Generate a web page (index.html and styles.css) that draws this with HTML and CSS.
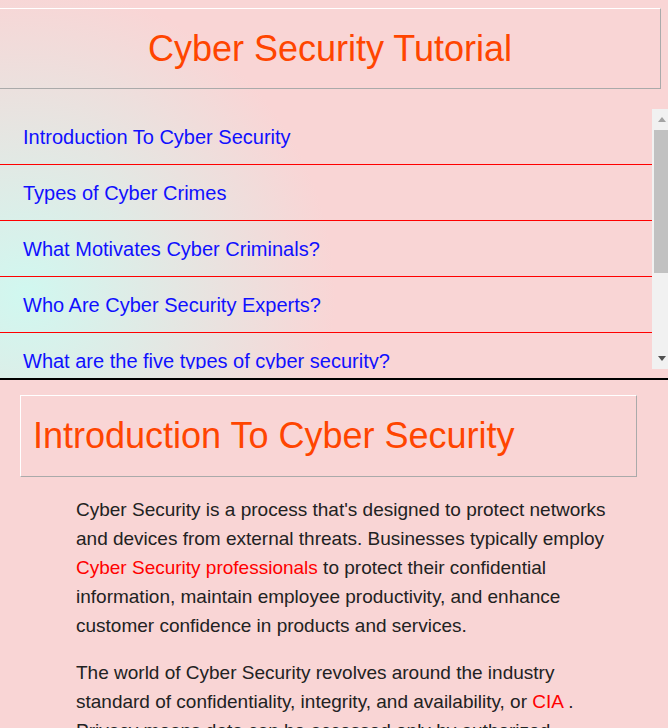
FILE: index.html
```html
<!DOCTYPE html>
<html lang="en">
<head>
<meta charset="utf-8">
<title>Cyber Security Tutorial</title>
<link rel="stylesheet" href="styles.css">
</head>
<body>
<div class="top">
  <header class="banner">
    <h1 class="site-title">Cyber Security Tutorial</h1>
  </header>
  <nav class="topics">
    <div class="topic-window">
      <ul class="topic-list">
        <li><a class="topic-link" href="#intro">Introduction To Cyber Security</a></li>
        <li><a class="topic-link" href="#types">Types of Cyber Crimes</a></li>
        <li><a class="topic-link" href="#motives">What Motivates Cyber Criminals?</a></li>
        <li><a class="topic-link" href="#experts">Who Are Cyber Security Experts?</a></li>
        <li><a class="topic-link" href="#five">What are the five types of cyber security?</a></li>
        <li><a class="topic-link" href="#tools">Cyber Security Tools</a></li>
        <li><a class="topic-link" href="#conclusion">Conclusion</a></li>
      </ul>
    </div>
    <div class="rail" aria-hidden="true">
      <div class="rail-btn"><span class="arrow arrow-up"></span></div>
      <div class="rail-track"><div class="rail-thumb"></div></div>
      <div class="rail-btn"><span class="arrow arrow-down"></span></div>
    </div>
  </nav>
</div>
<main class="content">
  <h2 class="section-title" id="intro">Introduction To Cyber Security</h2>
  <p class="para">Cyber Security is a process that's designed to protect networks and devices from external threats. Businesses typically employ <span class="hl">Cyber Security professionals</span> to protect their confidential information, maintain employee productivity, and enhance customer confidence in products and services.</p>
  <p class="para">The world of Cyber Security revolves around the industry standard of confidentiality, integrity, and availability, or <span class="hl">CIA</span> . Privacy means data can be accessed only by authorized parties; integrity assures information is reliable and accurate; and availability means data is available to those who need it.</p>
</main>
</body>
</html>
```
FILE: styles.css
```css
html, body {
  margin: 0;
  padding: 0;
}
body {
  background: #f9d5d5;
  font-family: "Liberation Sans", Arial, sans-serif;
}
.top {
  padding-top: 8px;
  border-bottom: 2px solid #000;
  background: radial-gradient(circle at 25px 295px, #d0f8f0 0px, #f9d5d5 310px);
}
.banner {
  margin-right: 7px;
  border: 1px solid;
  border-color: #ffffff #aaaaaa #aaaaaa #ffffff;
  border-left: none;
  padding: 19px 0;
  text-align: center;
}
.site-title {
  margin: 0;
  font-size: 36px;
  line-height: 41px;
  font-weight: normal;
  color: #ff4500;
}
.topics {
  display: flex;
  margin-top: 20px;
  margin-bottom: 9px;
  height: 260px;
}
.topic-window {
  flex: 1;
  overflow: hidden;
}
.topic-list {
  list-style: none;
  margin: 0;
  padding: 0;
}
.topic-link {
  display: block;
  padding: 17px 23px 15px;
  border-bottom: 1px solid #ff0000;
  color: #1010ff;
  text-decoration: none;
  font-size: 20px;
  line-height: 23px;
}
.rail {
  flex: none;
  width: 16px;
  display: flex;
  flex-direction: column;
  background: #f1f1f1;
}
.rail-btn {
  flex: none;
  height: 21px;
  display: flex;
  align-items: center;
  padding-left: 6px;
}
.arrow {
  width: 0;
  height: 0;
  border-left: 4.5px solid transparent;
  border-right: 4.5px solid transparent;
}
.arrow-up {
  border-bottom: 5px solid #a3a3a3;
}
.arrow-down {
  border-top: 5px solid #505050;
}
.rail-track {
  flex: 1;
  padding-left: 2px;
}
.rail-thumb {
  height: 143px;
  background: #c1c1c1;
}
.content {
  padding: 15px 31px 20px 20px;
}
.section-title {
  margin: 0;
  border: 1px solid;
  border-color: #ffffff #aaaaaa #aaaaaa #ffffff;
  padding: 19px 12px 20px;
  font-size: 36px;
  line-height: 41px;
  font-weight: normal;
  color: #ff4500;
}
.para {
  margin: 18px 20px 0 56px;
  font-size: 19px;
  line-height: 29px;
  color: #222222;
}
.hl {
  color: #ff0000;
}
```
